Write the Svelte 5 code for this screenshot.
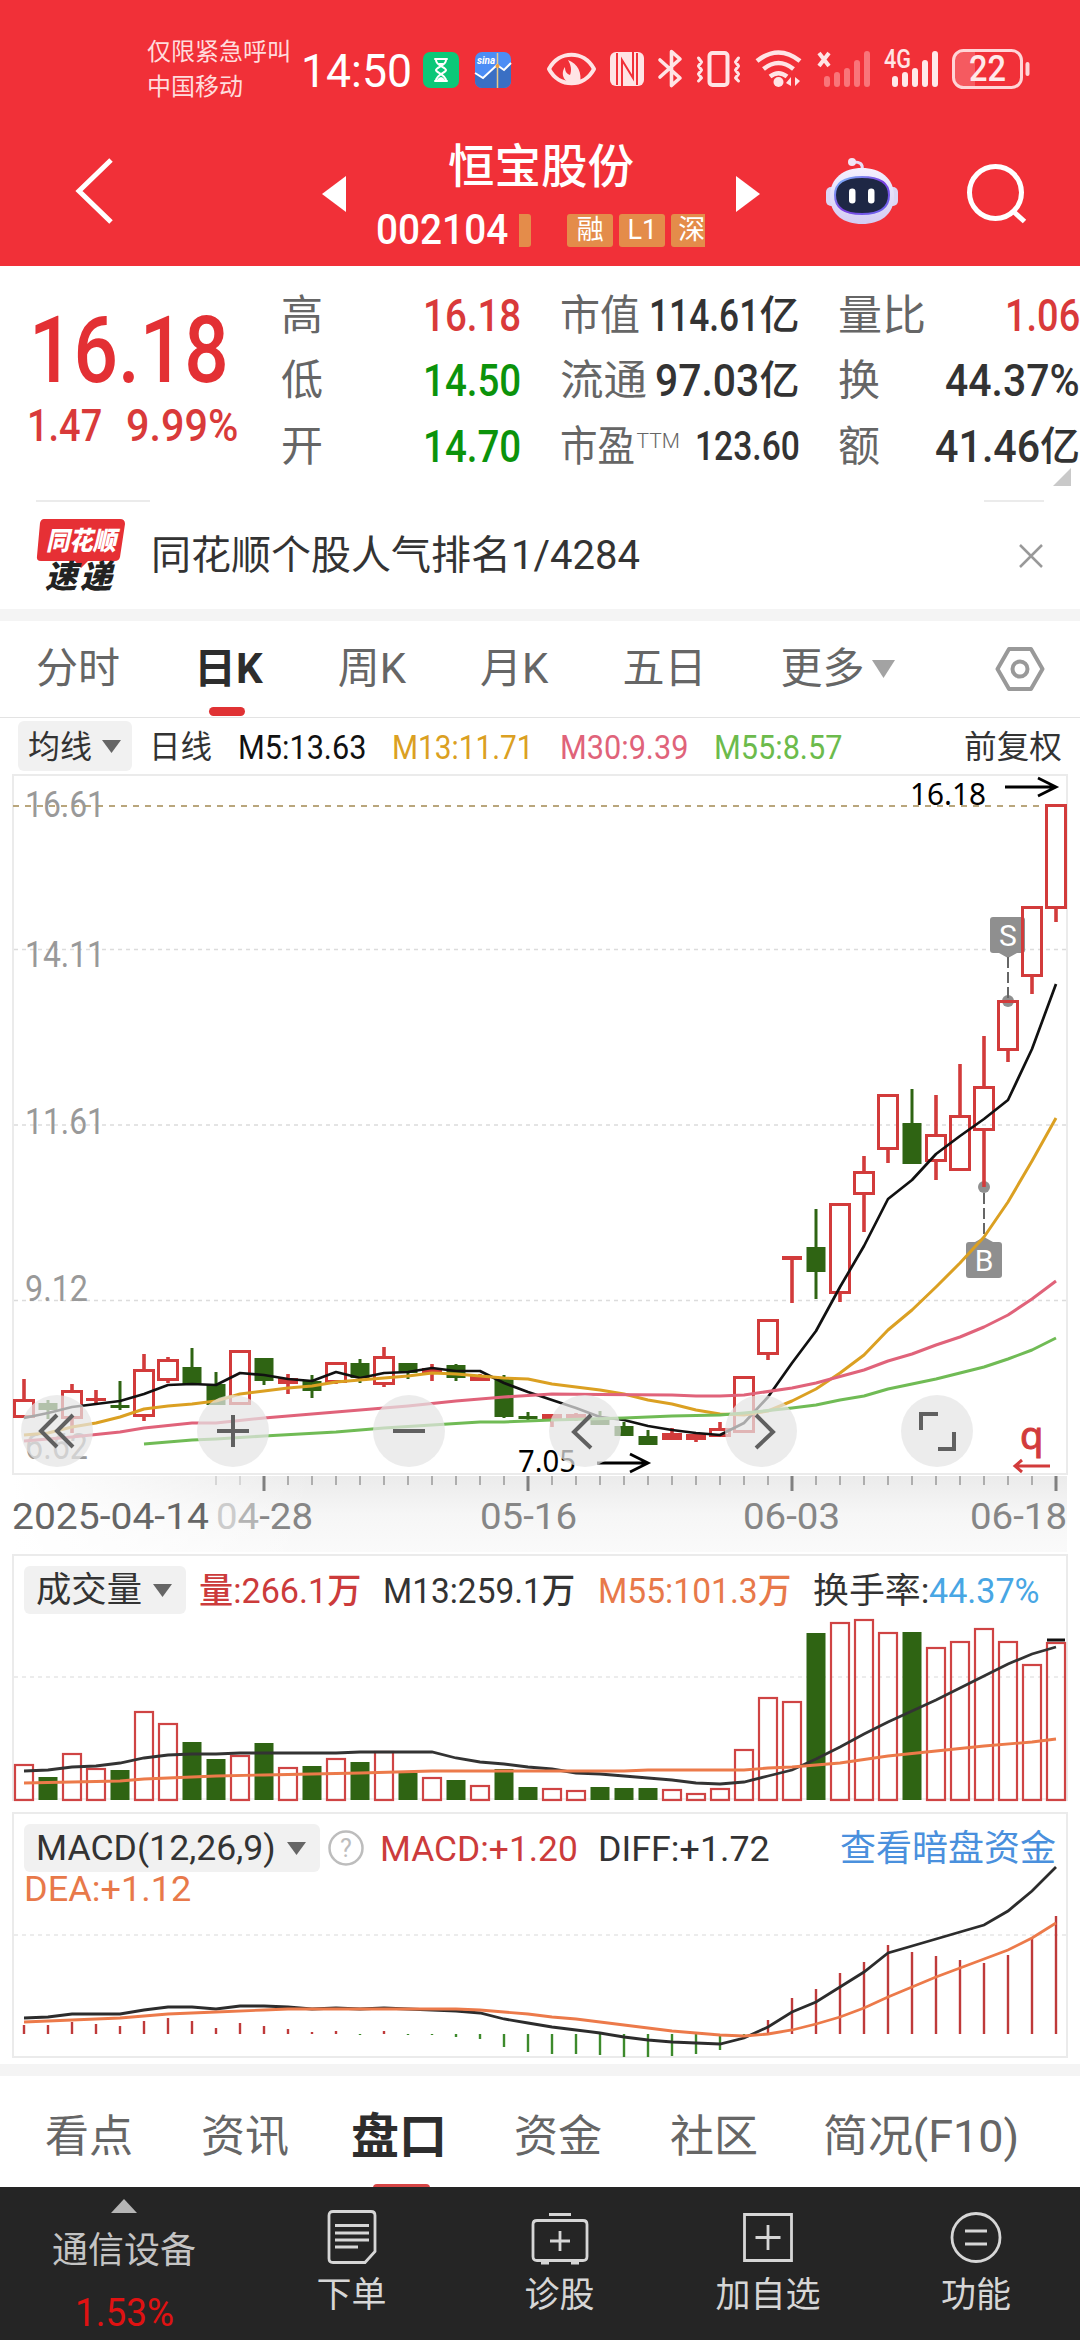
<script lang="ts">
	type Candle = [string, number, number, number, number];

	const STEP = 24;
	const px = (i: number) => 24 + i * STEP;

	// colour, high, body top, body bottom, low
	const candles: Candle[] = [
		['r', 1379, 1399, 1418, 1418], ['g', 1400, 1403, 1410, 1419], ['r', 1384, 1390, 1419, 1433],
		['r', 1390, 1398, 1401, 1405], ['g', 1381, 1405, 1408, 1410], ['r', 1354, 1369, 1417, 1421],
		['r', 1357, 1359, 1381, 1383], ['g', 1348, 1367, 1384, 1384], ['g', 1372, 1384, 1405, 1405],
		['r', 1350, 1350, 1405, 1405], ['g', 1358, 1358, 1381, 1385], ['r', 1374, 1378, 1384, 1394],
		['g', 1375, 1381, 1391, 1398], ['r', 1362, 1362, 1383, 1384], ['g', 1359, 1363, 1378, 1383],
		['r', 1347, 1356, 1385, 1387], ['g', 1363, 1363, 1373, 1379], ['r', 1364, 1368, 1373, 1381],
		['g', 1364, 1365, 1378, 1381], ['r', 1374, 1375, 1381, 1381], ['g', 1375, 1378, 1417, 1418],
		['g', 1412, 1416, 1419, 1422], ['r', 1414, 1414, 1419, 1427], ['r', 1413, 1414, 1419, 1421],
		['g', 1411, 1418, 1425, 1425], ['g', 1422, 1426, 1436, 1436], ['g', 1430, 1436, 1445, 1445],
		['r', 1428, 1433, 1440, 1440], ['r', 1434, 1434, 1440, 1442], ['r', 1422, 1428, 1437, 1437],
		['r', 1376, 1376, 1433, 1433], ['r', 1319, 1319, 1355, 1360], ['r', 1256, 1256, 1260, 1303],
		['g', 1209, 1247, 1272, 1299], ['r', 1203, 1203, 1294, 1302], ['r', 1156, 1171, 1195, 1232],
		['r', 1094, 1094, 1150, 1163], ['g', 1089, 1123, 1164, 1164], ['r', 1095, 1134, 1162, 1180],
		['r', 1064, 1115, 1171, 1171], ['r', 1036, 1086, 1131, 1187], ['r', 1000, 1000, 1051, 1062],
		['r', 906, 906, 977, 994], ['r', 804, 804, 909, 922]
	];

	const ma5 = [1418, 1413, 1407, 1404, 1401, 1394, 1385, 1384, 1385, 1373, 1375, 1379, 1381, 1372, 1378, 1373, 1372, 1368, 1371, 1371, 1383, 1392, 1400, 1408, 1417, 1420, 1426, 1430, 1433, 1435, 1423, 1397, 1363, 1331, 1287, 1246, 1199, 1180, 1154, 1136, 1119, 1100, 1049, 984];
	const ma13 = [1435, 1433, 1427, 1423, 1417, 1409, 1406, 1404, 1401, 1394, 1391, 1388, 1386, 1382, 1380, 1378, 1376, 1373, 1374, 1376, 1378, 1379, 1384, 1387, 1390, 1394, 1400, 1404, 1410, 1414, 1415, 1411, 1401, 1389, 1373, 1355, 1330, 1310, 1287, 1263, 1237, 1202, 1161, 1118];
	const ma30: [number, number][] = [[0, 1441], [2, 1437], [4, 1432], [5, 1428], [7, 1423], [8, 1423], [10, 1418], [13, 1412], [16, 1406], [18, 1401], [20, 1397], [22, 1394], [24, 1394.5], [27, 1395], [28, 1396], [29, 1396], [30, 1395], [32, 1388], [33, 1383], [35, 1370], [36, 1361], [37, 1354], [38, 1345], [39, 1337], [40, 1327], [41, 1315], [42, 1299], [43, 1281]];
	const ma55: [number, number][] = [[5, 1444], [7, 1440], [8, 1439], [10, 1436], [13, 1432], [15, 1428], [17, 1425], [19, 1422], [20, 1422], [22, 1420], [25, 1418], [27, 1416], [29, 1415], [30, 1413], [32, 1408], [33, 1405], [34, 1400], [35, 1396], [36, 1389], [37, 1384], [38, 1379], [39, 1373], [40, 1367], [41, 1359], [42, 1350], [43, 1338]];

	const volTops = [1764, 1777, 1753, 1768, 1770, 1711, 1723, 1742, 1759, 1755, 1743, 1767, 1766, 1758, 1762, 1751, 1773, 1777, 1780, 1785, 1769, 1787, 1788, 1790, 1787, 1788, 1788, 1789, 1793, 1788, 1749, 1697, 1701, 1633, 1622, 1619, 1632, 1632, 1647, 1641, 1628, 1641, 1664, 1642];
	const volMa13: [number, number][] = [[0, 1771], [1, 1770], [2, 1767], [3, 1766], [4, 1763], [5, 1758], [6, 1755], [7, 1754], [8, 1754], [9, 1753], [13, 1753], [14, 1752], [17, 1752], [18, 1758], [19, 1762], [20, 1764], [21, 1767], [22, 1769], [23, 1773], [24, 1774], [26, 1778], [27, 1780], [28, 1783], [29, 1784], [30, 1782], [31, 1776], [32, 1770], [33, 1759], [34, 1747], [35, 1734], [36, 1722], [37, 1711], [38, 1700], [39, 1688], [40, 1676], [41, 1664], [42, 1654], [43, 1647]];
	const volMa55: [number, number][] = [[0, 1783], [4, 1781], [5, 1779], [7, 1777], [8, 1776], [10, 1775], [12, 1774], [14, 1773], [17, 1771], [25, 1771], [26, 1770], [30, 1770], [31, 1768], [32, 1767], [33, 1765], [34, 1763], [36, 1756], [38, 1751], [40, 1746], [42, 1742], [43, 1739]];

	const MACD_ZERO = 2034;
	const macdBars = [2025, 2025, 2022, 2024, 2026, 2021, 2018, 2021, 2028, 2023, 2026, 2029, 2032, 2031, 2035, 2031, 2035, 2035, 2037, 2039, 2047, 2052, 2054, 2054, 2055, 2057, 2057, 2056, 2054, 2050, 2037, 2020, 1998, 1989, 1973, 1962, 1945, 1952, 1956, 1960, 1963, 1955, 1938, 1916];
	const diff = [2018, 2017, 2014, 2014, 2014, 2010, 2007, 2007, 2009, 2006, 2006, 2007, 2009, 2008, 2009, 2008, 2009, 2010, 2011, 2013, 2019, 2023, 2027, 2030, 2033, 2037, 2040, 2042, 2043, 2044, 2038, 2027, 2012, 2002, 1987, 1972, 1953, 1946, 1939, 1932, 1925, 1911, 1891, 1867];
	const dea: [number, number][] = [[0, 2022], [2, 2020], [4, 2018], [6, 2014], [8, 2012], [10, 2010], [11, 2009], [18, 2009], [19, 2010], [20, 2012], [21, 2014], [22, 2017], [23, 2019], [24, 2022], [25, 2025], [26, 2028], [27, 2031], [28, 2033], [29, 2035], [30, 2036], [31, 2034], [32, 2030], [33, 2024], [34, 2017], [35, 2008], [36, 1997], [37, 1987], [38, 1977], [39, 1968], [40, 1959], [41, 1950], [42, 1938], [43, 1923]];

	const line = (ys: number[]) => ys.map((y, i) => `${px(i)},${y}`).join(' ');
	const sparse = (pts: [number, number][]) => pts.map(([i, y]) => `${px(i)},${y}`).join(' ');

	const ticks = Array.from({ length: 36 }, (_, n) => n + 8);
	const axisLabels: [string, number, number][] = [
		['16.61', 817, 80], ['14.11', 967, 80], ['11.61', 1134, 80], ['9.12', 1301, 63], ['6.62', 1459, 63]
	];
	const dates: [string, number][] = [['05-16', 480], ['06-03', 743], ['06-18', 970]];

	const stats = [
		[['高', 42, '16.18', 98, '', 'up'], ['市值', 80, '114.61', 110, '亿', 'dark'], ['量比', 88, '1.06', 75, '', 'up']],
		[['低', 42, '14.50', 98, '', 'down'], ['流通', 87, '97.03', 104, '亿', 'dark'], ['换', 42, '44.37%', 135, '', 'dark']],
		[['开', 42, '14.70', 98, '', 'down'], ['市盈', 75, '123.60', 105, '', 'small'], ['额', 42, '41.46', 105, '亿', 'dark']]
	] as [string, number, string, number, string, string][][];

	// Squeeze a text run horizontally to the given width and keep the flow in step
	function fit(node: HTMLElement, width: number) {
		const natural = node.offsetWidth;
		node.style.transform = `scaleX(${width / natural})`;
		node.style.marginRight = `${width - natural}px`;
	}
</script>

{#snippet t(text: string, width: number, cls = '')}
	<span class="t {cls}" use:fit={width}>{text}</span>
{/snippet}

{#snippet caret()}
	<svg class="caret" width="19" height="13" viewBox="0 0 19 13"><path d="M0 0h19L9.500 13z" fill="#666" /></svg>
{/snippet}

<div class="screen">
	<header>
		<div class="status">
			<div class="carrier">
				<span>仅限紧急呼叫</span>
				<span>中国移动</span>
			</div>
			<div class="clock">{@render t('14:50', 111)}</div>
			<svg class="status-icons" width="640" height="60" viewBox="410 40 640 60">
				<rect x="423" y="52" width="36" height="36" rx="7" fill="#0bc878" />
				<g fill="none" stroke="#fff" stroke-width="2" stroke-linecap="round">
					<path d="M435 59h12M435 81h12M436 60c0 6 10 7 10 10s-10 4-10 11M446 60c0 6-10 7-10 10s10 4 10 11" />
				</g>
				<path d="M438 63h6l-3 4zM437 80q4-6 8 0z" fill="#fff" />
				<rect x="475" y="52" width="36" height="36" rx="7" fill="#4c8df5" />
				<path d="M475 73l8 5 14-13 7 5 7-7v18a7 7 0 0 1-7 7h-22a7 7 0 0 1-7-7z" fill="#3a6fc4" />
				<path d="M475 73l8 5 14-13 7 5 7-7" fill="none" stroke="#fff" stroke-width="2" />
				<path d="M497.500 53v35" stroke="#e8c98a" stroke-width="1.500" />
				<circle cx="497.500" cy="66" r="2" fill="#f0a040" />
				<text x="477" y="64" class="sina">sina</text>

				<g fill="none" stroke="#ffe4e5" stroke-width="4" stroke-linejoin="round" stroke-linecap="round">
					<path d="M549 69c10-19 35-19 45 0c-10 19-35 19-45 0z" />
					<path d="M660 60l20 18-8.500 7.500v-34l8.500 7.500-20 18" stroke-width="3.600" />
					<rect x="709.500" y="53" width="18" height="32" rx="3" />
					<path d="M698.500 58l3 4-3 4 3 4-3 4 3 4-3 3M738.500 58l-3 4 3 4-3 4 3 4-3 4 3 3" stroke-width="3" />
					<path d="M757 61q21.500-17 43 0M763.500 69q15-12 30 0M770 76.500q8.500-6.500 17 0" stroke-width="4.600" stroke-linecap="butt" />
				</g>
				<path d="M568 60c10 4 14 12 12 24h-6c-10-1-14-10-9-17c0 5 2 7 5 8c2-5 1-10-2-15z" fill="#ffe4e5" />
				<rect x="610" y="52" width="34" height="34" rx="6" fill="#ffe4e5" />
				<path d="M617 53v32M637 53v32" stroke="#f13038" stroke-width="2" />
				<path d="M622 86V60l11 18V52" fill="none" stroke="#f13038" stroke-width="2" />
				<circle cx="778.500" cy="82" r="5" fill="#ffe4e5" />
				<path d="M791 77v9l-5-3zM795 77v9l5-5z" fill="#ffe4e5" />
				<path d="M819 53l10 13M829 53l-10 13" stroke="#ffe4e5" stroke-width="4" />
				<g stroke-width="6" stroke-linecap="round">
					<path d="M827 79v5M837 75v9M847 71v13M857 63v21M867 54v30" stroke="#f9757a" />
					<path d="M895 79v5M905 75v9M915 71v13M925 63v21M935 54v30" stroke="#ffe9ea" />
				</g>
				<text x="884" y="67.500" class="net" textLength="27" lengthAdjust="spacingAndGlyphs">4G</text>
				<path d="M963 51h12v35h-12a9 9 0 0 1-9-9v-17a9 9 0 0 1 9-9z" fill="#f55a60" />
				<rect x="953.500" y="50.500" width="68" height="37" rx="10" fill="none" stroke="#ffd5d7" stroke-width="3" />
				<path d="M1027.500 64v10" stroke="#ffd5d7" stroke-width="4" stroke-linecap="round" />
				<text x="969" y="81" class="batt" textLength="37" lengthAdjust="spacingAndGlyphs">22</text>
			</svg>
		</div>
		<div class="bar">
			<svg class="back" width="40" height="70" viewBox="0 0 40 70"><path d="M36 4L4 35l32 31" fill="none" stroke="#fff" stroke-width="5" /></svg>
			<svg class="prev" width="24" height="36" viewBox="0 0 24 36"><path d="M24 0v36L0 18z" fill="#fff" /></svg>
			<div class="stock">
				<div class="name">恒宝股份</div>
				<div class="code">
					{@render t('002104', 132)}
					<i class="sliver"></i>
					<span class="tag">融</span>
					<span class="tag">L1</span>
					<span class="tag cut">深</span>
				</div>
			</div>
			<svg class="next" width="24" height="36" viewBox="0 0 24 36"><path d="M0 0v36l24-18z" fill="#fff" /></svg>
			<svg class="robot" width="74" height="68" viewBox="824 157 74 68">
				<defs>
					<linearGradient id="shell" x1="0" y1="0" x2="0" y2="1">
						<stop offset="0" stop-color="#f4f0ff" />
						<stop offset="1" stop-color="#d3ccf3" />
					</linearGradient>
					<linearGradient id="rim" x1="0" y1="0" x2="1" y2="1">
						<stop offset="0" stop-color="#7fc4ff" />
						<stop offset=".5" stop-color="#7a3fe0" />
						<stop offset="1" stop-color="#6a6cf0" />
					</linearGradient>
				</defs>
				<path d="M861 170q2-9-10-8" fill="none" stroke="#e8def6" stroke-width="3" />
				<circle cx="851" cy="162" r="4" fill="#f3e6f5" />
				<rect x="825" y="187" width="12" height="19" rx="5" fill="#dcd6f5" />
				<rect x="885" y="187" width="12" height="19" rx="5" fill="#dcd6f5" />
				<path d="M829 196c0-18 14-28 32-28s32 10 32 28c0 19-14 28-32 28s-32-9-32-28z" fill="url(#shell)" />
				<path d="M834 195c0-13 10-18 27-18s27 5 27 18-9 19-27 19-27-6-27-19z" fill="#1e2745" stroke="url(#rim)" stroke-width="2" />
				<rect x="848" y="188.500" width="6.500" height="15" rx="3.200" fill="#fff" />
				<rect x="867" y="188.500" width="6.500" height="15" rx="3.200" fill="#fff" />
			</svg>
			<svg class="search" width="64" height="62" viewBox="964 162 64 62"><g fill="none" stroke="#fff" stroke-width="5"><circle cx="994.500" cy="192.500" r="26" /><path d="M1012.500 211.500l11 10" /></g></svg>
		</div>
	</header>

	<section class="quote">
		<div class="price">
			<div class="last">{@render t('16.18', 200)}</div>
			<div class="change">{@render t('1.47', 75)}{@render t('9.99%', 112)}</div>
		</div>
		<div class="stats">
			{#each stats as row, r}
				{#each row as [label, lw, value, vw, unit, tone], c}
					<div class="stat">
						<span class="label">
							{@render t(label, lw)}{#if r === 2 && c === 1}<sup>TTM</sup>{/if}
						</span>
						<span class="value {tone}">{@render t(value, vw)}{#if unit}<b>{unit}</b>{/if}</span>
					</div>
				{/each}
			{/each}
		</div>
		<svg class="corner" width="18" height="18" viewBox="0 0 18 18"><path d="M18 0v18H0z" fill="#c9c9c9" /></svg>
	</section>

	<section class="notice">
		<div class="rules"><i></i><i></i></div>
		<div class="notice-row">
			<div class="logo">
				<svg width="90" height="50" viewBox="0 0 90 50"><path d="M8 1h76q5 0 5 5l-5 33q-1 4-5 4H52l-7 7-6-7H5q-5 0-4-5L4 5q1-4 4-4z" fill="#e63035" /><text x="10" y="32" class="brand" textLength="70" lengthAdjust="spacingAndGlyphs">同花顺</text></svg>
				<span>速递</span>
			</div>
			<div class="notice-text">{@render t('同花顺个股人气排名', 360)}{@render t('1/4284', 129)}</div>
			<svg class="close" width="26" height="26" viewBox="0 0 26 26"><path d="M2 2l22 22M24 2L2 24" stroke="#999" stroke-width="2.500" /></svg>
		</div>
	</section>

	<nav class="periods">
		<span>分时</span>
		<span class="on">日K</span>
		<span>周K</span>
		<span>月K</span>
		<span>五日</span>
		<span>更多</span>
		<svg class="more" width="23" height="18" viewBox="0 0 23 18"><path d="M0 0h23L11.500 18z" fill="#a3a3a3" /></svg>
		<svg class="settings" width="50" height="46" viewBox="0 0 50 46"><g fill="none" stroke="#999" stroke-width="4" stroke-linejoin="round"><path d="M14 3h22l11.500 20L36 43H14L2.500 23z" /><circle cx="25" cy="23" r="7.500" /></g></svg>
	</nav>

	<div class="legend">
		<span class="pill">{@render t('均线', 64)}{@render caret()}</span>
		{@render t('日线', 63)}
		{@render t('M5:13.63', 128, 'black num')}
		{@render t('M13:11.71', 142, 'gold num')}
		{@render t('M30:9.39', 128, 'pink num')}
		{@render t('M55:8.57', 128, 'green num')}
		<span class="adjust">{@render t('前复权', 98)}</span>
	</div>

	<div class="panel">
		<svg width="1080" height="780" viewBox="0 772 1080 780">
			<defs>
				<linearGradient id="axis" x1="0" y1="0" x2="0" y2="1">
					<stop offset="0" stop-color="#ebebeb" />
					<stop offset=".5" stop-color="#f6f6f6" />
					<stop offset="1" stop-color="#fafafa" />
				</linearGradient>
				<linearGradient id="veil">
					<stop offset="0" stop-color="#fff" />
					<stop offset="1" stop-color="#fff" stop-opacity="0" />
				</linearGradient>
			</defs>
			<rect x="13" y="1476" width="1054" height="76" fill="url(#axis)" />
			<rect x="13" y="1476" width="300" height="76" fill="url(#veil)" />
			<rect x="13" y="775" width="1054" height="699" fill="#fff" stroke="#ebebeb" stroke-width="2" />
			<g stroke="#dcdcdc" stroke-width="1.300" stroke-dasharray="4 4">
				<path d="M14 949.500h1052M14 1125h1052M14 1300.500h1052" />
			</g>
			<path d="M13 806H1046" stroke="#b9a67c" stroke-width="1.800" stroke-dasharray="6 6" />

			{#each axisLabels as [label, y, w]}
				<text x="25" {y} class="scale" textLength={w} lengthAdjust="spacingAndGlyphs">{label}</text>
			{/each}

			<g fill="#8f8f8f">
				<rect x="990" y="917" width="35" height="36" rx="3" />
				<path d="M999 953h18l-9 5z" />
				<rect x="966" y="1242" width="36" height="36" rx="3" />
				<path d="M975 1242h18l-9-5z" />
				<circle cx="1008" cy="1001" r="6" />
				<circle cx="984" cy="1187" r="6" />
			</g>
			<path d="M1008 957v42M984 1193v45" stroke="#666" stroke-width="2" stroke-dasharray="11 4" />
			<text x="1008" y="946" class="mark">S</text>
			<text x="984" y="1271" class="mark">B</text>

			{#each candles as [tone, high, top, bottom, low], i}
				{#if tone === 'g'}
					<path d="M{px(i)} {high}V{low}" class="wick-g" />
					<rect x={px(i) - 9.500} y={top} width="19" height={bottom - top} fill="#2f6413" />
				{:else}
					<path d="M{px(i)} {high}V{top}M{px(i)} {bottom}V{low}" class="wick-r" />
					{#if bottom - top < 8}
						<rect x={px(i) - 10} y={top} width="20" height={bottom - top} fill="#d23b3b" />
					{:else}
						<rect x={px(i) - 9.500} y={top + 1.500} width="19" height={bottom - top - 3} class="hollow" />
					{/if}
				{/if}
			{/each}

			<g fill="none" stroke-linejoin="round" stroke-width="3">
				<polyline points={line(ma5)} stroke="#111" stroke-width="2.700" />
				<polyline points={line(ma13)} stroke="#dba022" />
				<polyline points={sparse(ma30)} stroke="#e0637a" />
				<polyline points={sparse(ma55)} stroke="#70bb55" />
			</g>

			<text x="910" y="805" class="peak" textLength="76" lengthAdjust="spacingAndGlyphs">16.18</text>
			<path d="M1005 787h50M1038 778l18 9-18 9" class="arrow" />
			<text x="518" y="1472" class="peak" textLength="58" lengthAdjust="spacingAndGlyphs">7.05</text>
			<path d="M597 1463h50M630 1454l18 9-18 9" class="arrow" />
			<text x="1020" y="1449" class="q">q</text>
			<path d="M1050 1466h-34M1022 1460l-7 6 7 6" stroke="#d23b3b" stroke-width="3" fill="none" />

			{#each ticks as i}
				{#if i === 10 || i % 11 === 10}
					<path d="M{px(i)} 1476v15" stroke="#808080" stroke-width="3" />
				{:else}
					<path d="M{px(i)} 1476v9" stroke={i < 10 ? '#ccc' : '#999'} stroke-width="1.500" />
				{/if}
			{/each}
			<text x="12" y="1529" class="date first" textLength="197" lengthAdjust="spacingAndGlyphs">2025-04-14</text>
			<text x="216" y="1529" class="date" textLength="97" lengthAdjust="spacingAndGlyphs"><tspan fill="#ccc">0</tspan><tspan fill="#b4b4b4">4</tspan>-28</text>
			{#each dates as [label, x]}
				<text {x} y="1529" class="date" textLength="97" lengthAdjust="spacingAndGlyphs">{label}</text>
			{/each}
		</svg>
		<div class="controls">
			<button aria-label="最早"><svg viewBox="0 0 72 72"><path d="M36 20L20 36l16 16M52 20L36 36l16 16" /></svg></button>
			<button aria-label="放大"><svg viewBox="0 0 72 72"><path d="M20 36h32M36 20v32" /></svg></button>
			<button aria-label="缩小"><svg viewBox="0 0 72 72"><path d="M20 36h32" /></svg></button>
			<button aria-label="左移"><svg viewBox="0 0 72 72"><path d="M42 20L25 37l17 16" /></svg></button>
			<button aria-label="右移"><svg viewBox="0 0 72 72"><path d="M31 20l17 17-17 16" /></svg></button>
			<button aria-label="全屏"><svg viewBox="0 0 72 72"><path d="M20 35V19h17M53 37v17H37" /></svg></button>
		</div>
	</div>

	<div class="panel volume">
		<svg width="1080" height="260" viewBox="0 1552 1080 260">
			<path d="M13 1801V1555h1054v246" fill="#fff" stroke="#ebebeb" stroke-width="2" />
			<path d="M14 1677h1052" stroke="#e6e6e6" stroke-width="1.500" stroke-dasharray="4 4" />
			<path d="M14 1799h1052" stroke="#eee" stroke-width="1.500" />
			{#each volTops as top, i}
				{#if candles[i][0] === 'g'}
					<rect x={px(i) - 9.500} y={top} width="19" height={1800 - top} fill="#2f6413" />
				{:else}
					<rect x={px(i) - 9} y={top + 1} width="18" height={1799 - top} fill="none" stroke="#cf4444" stroke-width="2.200" />
				{/if}
			{/each}
			<path d="M1047 1640h18" stroke="#111" stroke-width="3" />
			<polyline points={sparse(volMa13)} fill="none" stroke="#333" stroke-width="2.800" />
			<polyline points={sparse(volMa55)} fill="none" stroke="#ec7a4a" stroke-width="2.800" />
		</svg>
		<div class="head">
			<span class="pill">{@render t('成交量', 106)}{@render caret()}</span>
			{@render t('量:266.1万', 162, 'up num')}
			{@render t('M13:259.1万', 192, 'num')}
			{@render t('M55:101.3万', 193, 'orange num')}
			<span class="turn">{@render t('换手率:', 116)}{@render t('44.37%', 111, 'sky num')}</span>
		</div>
	</div>

	<div class="panel macd">
		<svg width="1080" height="252" viewBox="0 1812 1080 252">
			<rect x="13" y="1813" width="1054" height="244" fill="#fff" stroke="#ebebeb" stroke-width="2" />
			<path d="M14 1935h1052" stroke="#e6e6e6" stroke-width="1.500" stroke-dasharray="4 4" />
			{#each macdBars as y, i}
				<path d="M{px(i)} {MACD_ZERO}V{y}" stroke={y > MACD_ZERO ? '#3d8a2c' : '#bf3a3a'} stroke-width="2.400" />
			{/each}
			<polyline points={line(diff)} fill="none" stroke="#2c2c2c" stroke-width="2.800" />
			<polyline points={sparse(dea)} fill="none" stroke="#ec7a4a" stroke-width="2.800" />
		</svg>
		<div class="head">
			<span class="pill">{@render t('MACD(12,26,9)', 240)}{@render caret()}</span>
			<svg class="help" width="38" height="38" viewBox="0 0 38 38"><circle cx="19" cy="19" r="16.500" fill="none" stroke="#bdbdbd" stroke-width="2.500" /><text x="19" y="28">?</text></svg>
			{@render t('MACD:+1.20', 198, 'up num')}
			{@render t('DIFF:+1.72', 172, 'num')}
			<span class="link">{@render t('查看暗盘资金', 216)}</span>
		</div>
		<div class="dea">{@render t('DEA:+1.12', 167, 'orange num')}</div>
	</div>

	<nav class="topics">
		<span>看点</span>
		<span>资讯</span>
		<span class="on">盘口</span>
		<span>资金</span>
		<span>社区</span>
		<span class="last-topic">{@render t('简况(F10)', 196)}</span>
	</nav>

	<footer>
		<div class="item index">
			<svg width="26" height="14" viewBox="0 0 26 14"><path d="M13 0l13 14H0z" fill="#b5b5b5" /></svg>
			<span class="sector">通信设备</span>
			<span class="pct">{@render t('1.53%', 99)}</span>
		</div>
		<div class="item">
			<svg width="60" height="56" viewBox="0 0 60 56"><path d="M11 2.500h38q4 0 4 4v36l-10 11H11q-4 0-4-4v-43q0-4 4-4zM13 16.500h34M13 24h34M13 31h34M13 38h23" /></svg>
			<span>下单</span>
		</div>
		<div class="item">
			<svg width="60" height="56" viewBox="0 0 60 56"><path d="M7 11.500h46q4 0 4 4v32q0 4-4 4H7q-4 0-4-4v-32q0-4 4-4zM19 5.500h22M30 22v20M20 32h20M11 54h8M41 54h8" /></svg>
			<span>诊股</span>
		</div>
		<div class="item">
			<svg width="60" height="56" viewBox="0 0 60 56"><path d="M6.500 5.500h47v46h-47zM30 16v25M17.500 28.500h25" /></svg>
			<span>加自选</span>
		</div>
		<div class="item">
			<svg width="60" height="56" viewBox="0 0 60 56"><circle cx="30" cy="28.500" r="24" /><path d="M19 22h22M19 35h22" /></svg>
			<span>功能</span>
		</div>
	</footer>
</div>

<style>
	:global(body) {
		background: #fff;
	}

	.screen {
		width: 1080px;
		height: 2340px;
		overflow: hidden;
		background: #fff;
		color: #333;
		font-family: Roboto, 'Noto Sans CJK SC', sans-serif;
		line-height: 1;
	}

	.screen :global(svg) {
		display: block;
		flex: none;
	}

	.t {
		display: inline-block;
		flex: none;
		white-space: nowrap;
		transform-origin: 0 50%;
	}

	/* header */
	header {
		height: 266px;
		background: #f13038;
		color: #fff;
	}

	.status {
		display: flex;
		height: 140px;
		padding-left: 147px;
	}

	.carrier {
		display: flex;
		flex-direction: column;
		gap: 10px;
		width: 154px;
		padding-top: 40px;
		font-size: 24px;
		line-height: 25px;
		color: #ffdcdd;
	}

	.clock {
		width: 109px;
		padding-top: 47px;
		font-size: 47px;
	}

	.status-icons {
		margin-top: 40px;
	}

	.sina {
		font: italic 700 10px Roboto, sans-serif;
		fill: #fff;
	}

	.net {
		font: 500 25px Roboto, sans-serif;
		fill: #ffe4e5;
	}

	.batt {
		font: 500 36px Roboto, sans-serif;
		fill: #ffe9ea;
	}

	.bar {
		display: flex;
		align-items: flex-start;
		height: 126px;
		padding-left: 75px;
	}

	.back {
		margin-top: 16px;
	}

	.prev {
		margin: 36px 0 0 207px;
	}

	.stock {
		width: 390px;
	}

	.name {
		margin-top: 4px;
		font-size: 46.5px;
		font-weight: 500;
		line-height: 46px;
		text-align: center;
	}

	.code {
		display: flex;
		align-items: center;
		height: 34px;
		margin-top: 23px;
		padding-left: 30px;
		font-size: 42px;
		font-weight: 500;
	}

	.sliver {
		width: 12px;
		height: 33px;
		margin: 0 36px 0 11px;
		border-radius: 0 3px 3px 0;
		background: #e48c4a;
	}

	.tag {
		display: grid;
		place-items: center;
		width: 46px;
		height: 33px;
		margin-right: 6px;
		border-radius: 3px;
		background: #e48c4a;
		font-size: 27px;
		font-weight: 400;
	}

	.tag.cut {
		justify-content: start;
		width: 27px;
		margin: 0;
		padding-left: 7px;
		border-radius: 3px 0 0 3px;
		overflow: hidden;
	}

	.next {
		margin-top: 36px;
	}

	.robot {
		margin: 17px 0 0 65px;
	}

	.search {
		margin: 22px 0 0 66px;
	}

	/* quote */
	.quote {
		position: relative;
		display: flex;
		height: 234px;
	}

	.price {
		width: 281px;
		color: #e33034;
	}

	.last {
		padding: 39px 0 0 29px;
		font-size: 92px;
		font-weight: 500;
	}

	.change {
		display: flex;
		gap: 24px;
		padding: 6px 0 0 27px;
		font-size: 45px;
		font-weight: 500;
		color: #d93a3a;
	}

	.stats {
		display: grid;
		grid-template-columns: 240px 240px 242px;
		grid-auto-rows: 65.5px;
		column-gap: 38.5px;
		padding-top: 17px;
	}

	.stat {
		display: flex;
		justify-content: space-between;
		align-items: center;
		white-space: nowrap;
	}

	.label {
		display: flex;
		font-size: 42px;
		color: #666;
	}

	.label sup {
		margin: 5px 0 0 2px;
		font-size: 21px;
		font-weight: 300;
		line-height: 1;
	}

	.value {
		display: flex;
		align-items: center;
		font-size: 44px;
		font-weight: 500;
		color: #333;
	}

	.value.small {
		font-size: 40px;
	}

	.value b {
		font-size: 40px;
		font-weight: 500;
	}

	.value.up {
		color: #d93a3a;
	}

	.value.down {
		color: #0b930b;
	}

	.corner {
		position: absolute;
		right: 9px;
		bottom: 14px;
	}

	/* notice */
	.notice {
		height: 109px;
		border-bottom: 12px solid #f4f4f4;
	}

	.rules {
		display: flex;
		justify-content: space-between;
		padding: 0 36px;
	}

	.rules i {
		width: 114px;
		height: 2px;
		background: #ebebeb;
	}

	.rules i:last-child {
		width: 60px;
	}

	.notice-row {
		display: flex;
		align-items: center;
		padding: 16px 36px 0;
	}

	.logo {
		width: 115px;
		height: 76px;
	}

	.logo span {
		display: block;
		margin: -7px 0 0 9px;
		font-size: 32px;
		font-weight: 900;
		font-style: italic;
		line-height: 32px;
		letter-spacing: 3px;
		color: #222;
	}

	.brand {
		font: italic 900 26px 'Noto Sans CJK SC', sans-serif;
		fill: #fff;
	}

	.notice-text {
		display: flex;
		align-items: center;
		flex: 1;
		font-size: 40px;
		color: #333;
	}

	/* period tabs */
	.periods {
		display: flex;
		align-items: center;
		height: 96px;
		padding-left: 36px;
		border-bottom: 1px solid #e3e3e3;
		font-size: 42px;
		white-space: nowrap;
		color: #666;
	}

	.periods span {
		margin-right: 74px;
	}

	.periods .on {
		position: relative;
		margin-right: 75px;
		font-weight: 700;
		color: #2d2d2d;
	}

	.periods .on::after {
		content: '';
		position: absolute;
		left: 50%;
		bottom: -26px;
		width: 36px;
		height: 9px;
		margin-left: -19px;
		border-radius: 5px;
		background: #e03234;
	}

	.periods .more {
		margin-left: -66px;
	}

	.periods .settings {
		margin-left: auto;
		margin-right: 35px;
	}

	/* indicator rows */
	.legend,
	.head {
		display: flex;
		align-items: center;
		font-size: 32px;
	}

	.legend {
		gap: 26px;
		height: 50px;
		padding: 3px 18px 1px;
	}

	.legend > .t,
	.adjust {
		padding-top: 2px;
	}

	.pill {
		display: flex;
		align-items: center;
		justify-content: space-between;
		box-sizing: border-box;
		width: 114px;
		height: 50px;
		padding: 1px 11px 0 10px;
		margin-right: -9px;
		border-radius: 6px;
		background: #f1f1f1;
	}

	.num {
		font-weight: 450;
	}

	.legend .num {
		font-size: 34px;
	}

	.adjust {
		margin-left: auto;
	}

	.black { color: #111; }
	.gold { color: #dba022; }
	.pink { color: #e0637a; }
	.green { color: #6cbb4c; }
	.up { color: #cc3b3b; }
	.orange { color: #e8794a; }
	.sky { color: #48a6e4; }

	/* charts */
	.panel {
		display: grid;
	}

	.panel > * {
		grid-area: 1 / 1;
	}

	.controls {
		display: flex;
		gap: 104px;
		padding: 623px 0 0 21px;
		height: 72px;
	}

	.controls button {
		flex: none;
		width: 72px;
		height: 72px;
		padding: 0;
		border: 0;
		border-radius: 50%;
		background: rgba(229, 229, 229, 0.72);
	}

	.controls path {
		fill: none;
		stroke: #606060;
		stroke-width: 4;
	}

	.hollow {
		fill: none;
		stroke: #d23b3b;
		stroke-width: 3;
	}

	.wick-r {
		stroke: #d23b3b;
		stroke-width: 3.6;
	}

	.wick-g {
		stroke: #2f6413;
		stroke-width: 3;
	}

	.scale {
		font: 450 36px Roboto, sans-serif;
		fill: #999;
	}

	.mark {
		font: 30px Roboto, sans-serif;
		fill: #fff;
		text-anchor: middle;
	}

	.peak {
		font: 31px 'Noto Sans', sans-serif;
		fill: #000;
	}

	.arrow {
		fill: none;
		stroke: #000;
		stroke-width: 2.8;
	}

	.q {
		font: 38px 'Noto Sans', sans-serif;
		fill: #d23b3b;
		stroke: #d23b3b;
	}

	.date {
		font: 450 36px Roboto, sans-serif;
		fill: #868686;
	}

	.date.first {
		fill: #666;
	}

	.head {
		gap: 22px;
		height: 48px;
		padding: 14px 24px 0;
		font-size: 35px;
	}

	.head > .t,
	.link {
		padding-top: 2px;
	}

	.head .pill {
		width: 162px;
		height: 48px;
		padding: 1px 14px 0 12px;
	}

	.turn {
		display: flex;
		padding-top: 2px;
	}

	.macd .head {
		padding-top: 12px;
		gap: 20px;
	}

	.macd .head .pill {
		width: 296px;
		margin-right: -13px;
	}

	.help {
		margin-right: -5px;
	}

	.help text {
		font: 25px Roboto, sans-serif;
		fill: #bdbdbd;
		text-anchor: middle;
	}

	.link {
		margin-left: auto;
		font-size: 36px;
		color: #4a90dd;
	}

	.dea {
		padding: 60px 0 0 24px;
		font-size: 35px;
	}

	/* topic tabs */
	.topics {
		display: flex;
		align-items: center;
		height: 101px;
		padding: 10px 0 0 45px;
		border-top: 12px solid #f4f4f4;
		font-size: 44px;
		white-space: nowrap;
		color: #666;
	}

	.topics > span {
		flex: none;
		margin-right: 68px;
	}

	.topics .on {
		position: relative;
		margin: 0 67px 0 -6px;
		font-size: 48px;
		font-weight: 700;
		color: #2d2d2d;
	}

	.topics .on::after {
		content: '';
		position: absolute;
		left: 22px;
		bottom: -31px;
		width: 57px;
		height: 8px;
		border-radius: 5px;
		background: #d64545;
	}

	.topics .last-topic {
		margin: 0 0 0 -3px;
	}

	/* bottom bar */
	footer {
		position: relative;
		display: grid;
		grid-template-columns: 248px 207px 209px 208px 208px;
		height: 153px;
		background: #252525;
		color: #d6d6d6;
		font-size: 35px;
	}

	.item {
		display: flex;
		flex-direction: column;
		align-items: center;
		gap: 13px;
		padding-top: 22px;
	}

	.item :global(svg) {
		fill: none;
		stroke: #d6d6d6;
		stroke-width: 2.8;
	}

	.item.index {
		gap: 0;
		padding-top: 12px;
	}

	.index svg {
		stroke: none;
	}

	.sector {
		margin-top: 20px;
		font-size: 36px;
		line-height: 36px;
		color: #c4c4c4;
	}

	.pct {
		margin-top: 25px;
		font-size: 38px;
		color: #e01212;
	}
</style>
